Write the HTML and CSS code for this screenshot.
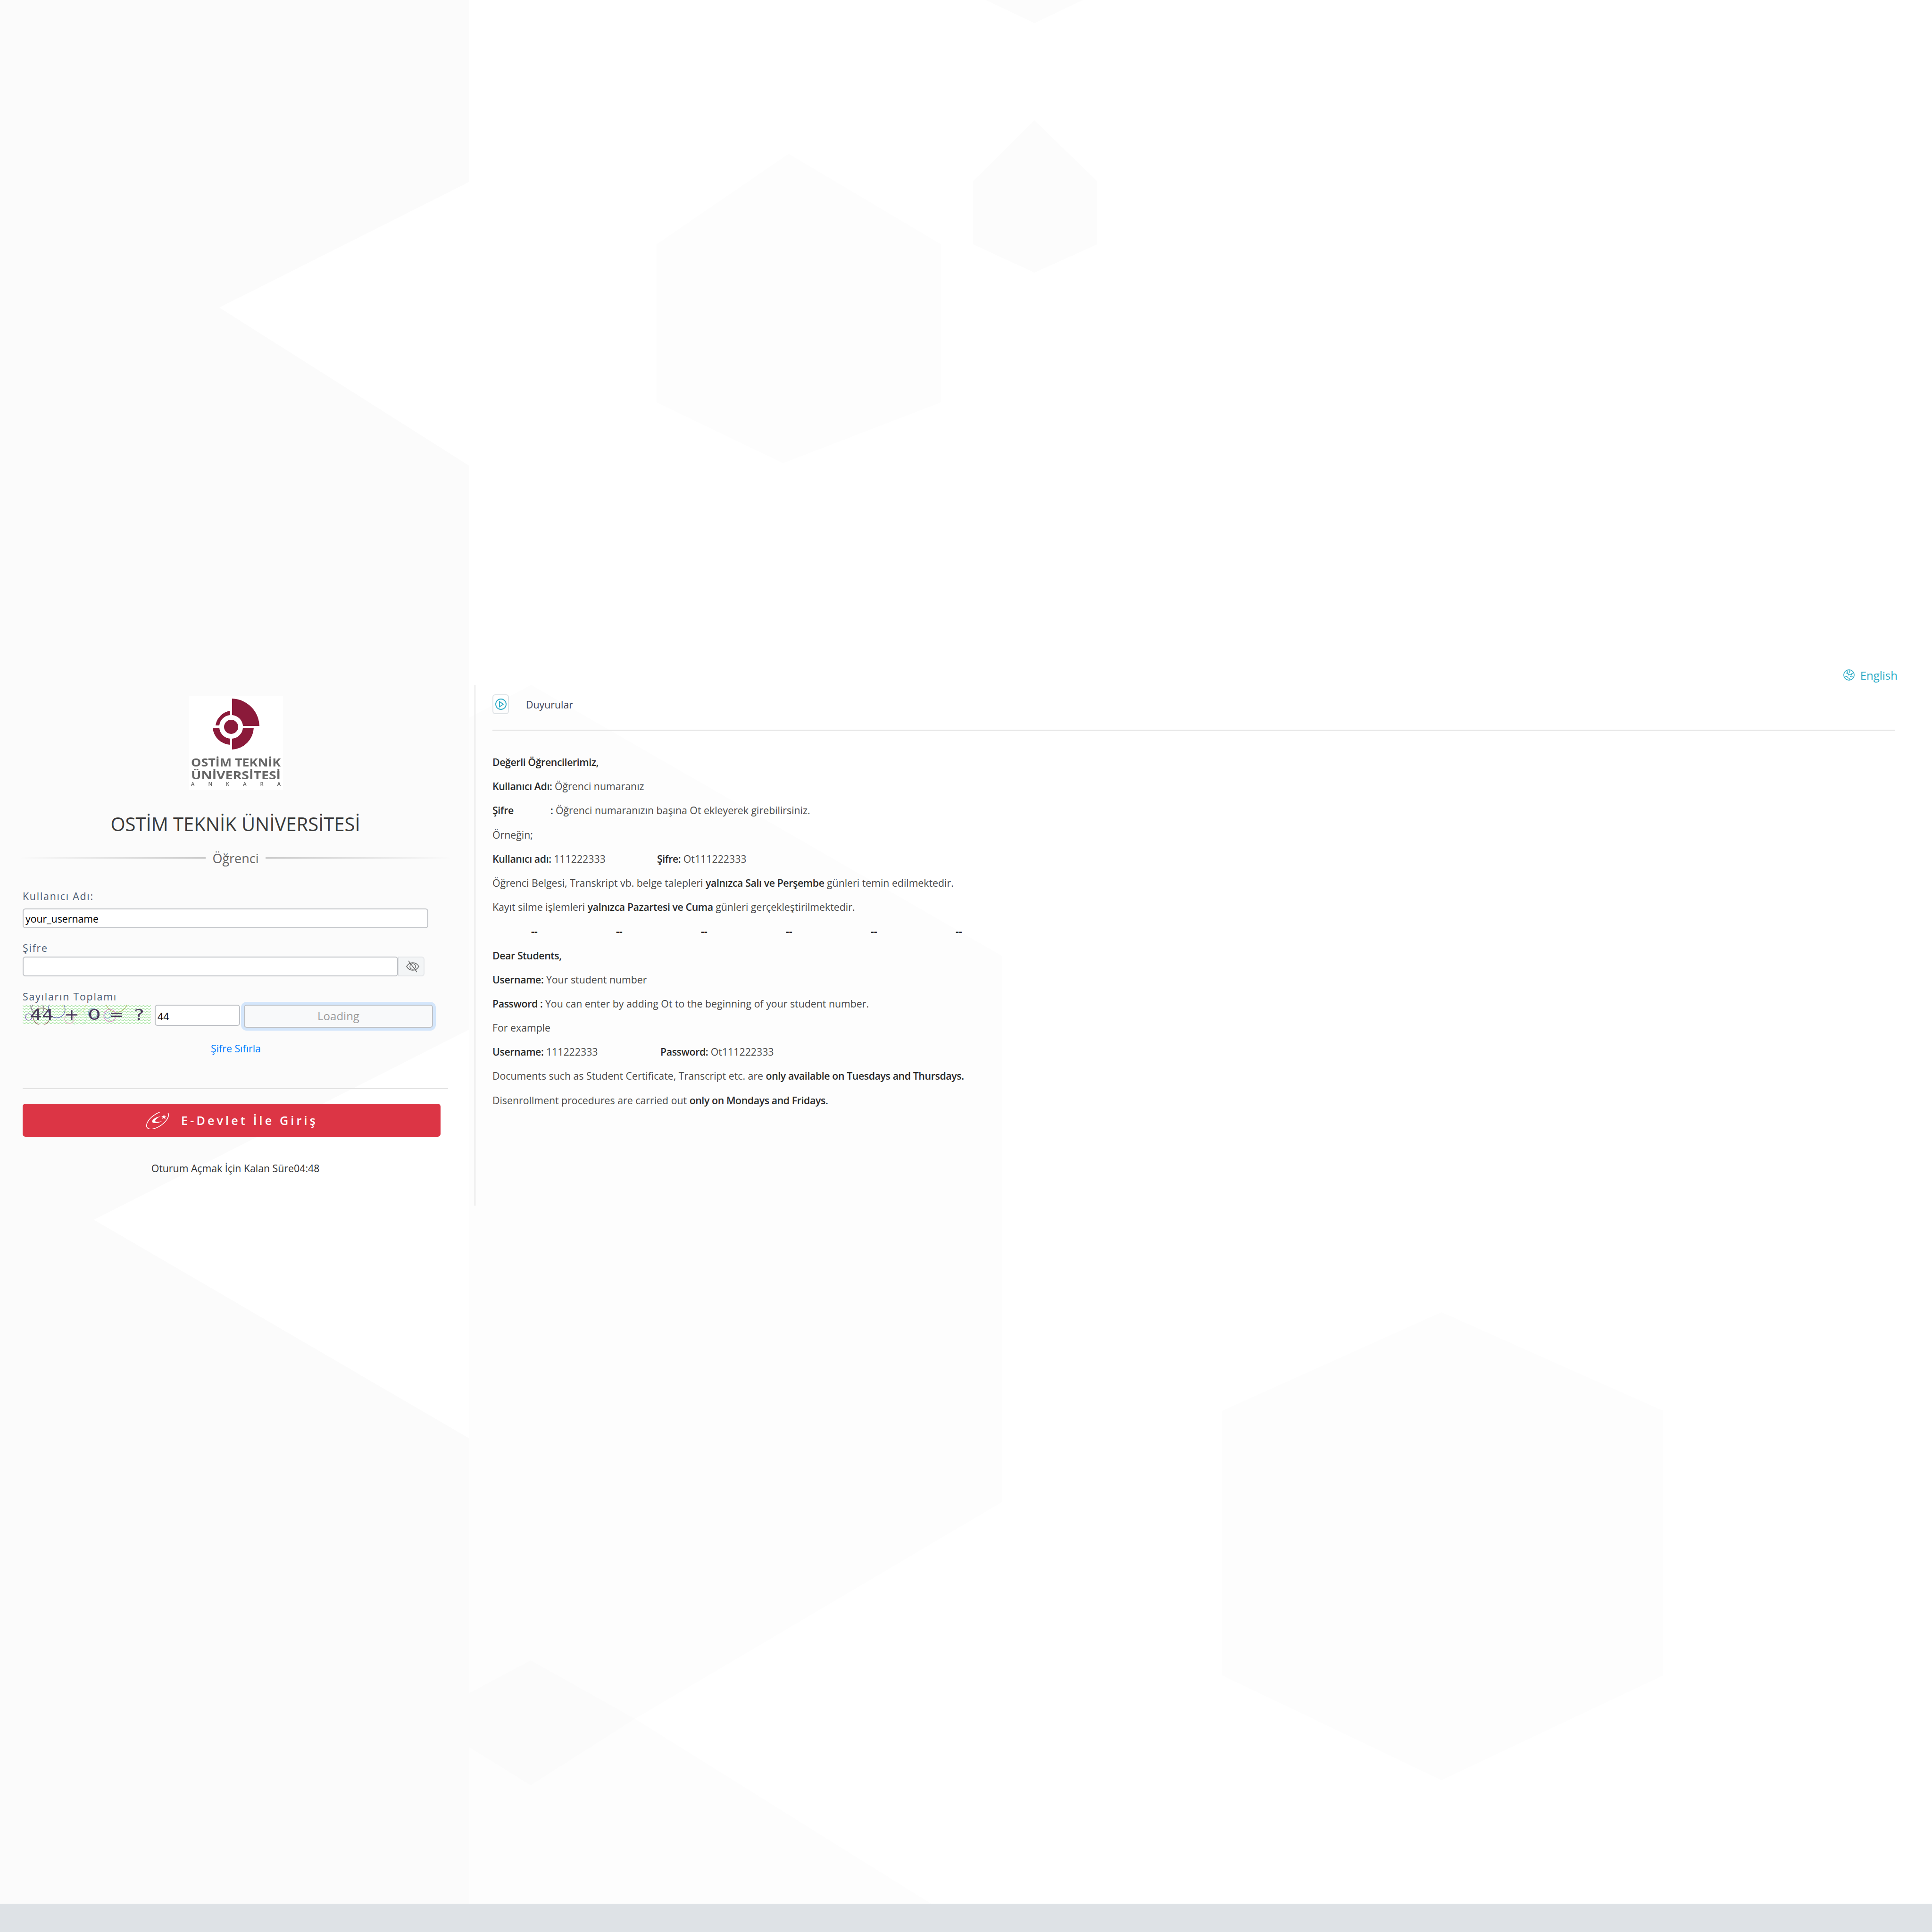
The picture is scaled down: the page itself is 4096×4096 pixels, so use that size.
FILE: index.html
```html
<!DOCTYPE html>
<html lang="tr">
<head>
<meta charset="utf-8">
<title>OSTİM Teknik Üniversitesi</title>
<link rel="stylesheet" href="styles.css">
</head>
<body>
<div class="page">
  <svg class="bg" width="4096" height="4036" viewBox="0 0 4096 4036" aria-hidden="true">
    <polygon class="s1" points="0,0 994,0 994,386 465,652 994,987 994,2183 199,2586 994,3049 994,4036 0,4036"/>
    <polygon class="s3" points="1126,1452 2125,2027 2125,3184 1346,3644 1125,3520 994,3590 994,1522"/>
    <polygon class="s3" points="994,3704 1125,3785 1346,3644 1974,4036 994,4036"/>
    <polygon class="s1" points="1125,3520 1346,3644 1125,3785 994,3704 994,3590"/>
    <polygon class="s3" points="1672,326 1995,518 1995,853 1660,982 1392,853 1392,518"/>
    <polygon class="s2" points="2193,255 2326,384 2326,518 2193,578 2063,518 2063,384"/>
    <polygon class="s2" points="2090,0 2193,49 2296,0"/>
    <polygon class="s3" points="3056,2782 3526,2991 3526,3552 3056,3774 2591,3552 2591,2991"/>
  </svg>
  <main class="main">
    <div class="lang">
      <a class="lang-link" href="#">
        <svg class="globe" width="24" height="24" viewBox="0 0 24 24" fill="none"><circle cx="12" cy="12" r="11"/><path d="M8 2c-1 2 0 3 1 4l-2 2 3 1 1 3 3-1 3 1 1-3 2-1M3 15c3-1 5 0 6 2s3 1 4 3l1 2M14 15l3 1 3 0M12 2l2 3-1 2"/></svg>
        <span>English</span>
      </a>
    </div>
    <div class="columns">
      <section class="login">
        <div class="logo">
          <svg width="200" height="200" viewBox="0 0 200 200">
            <g class="mark">
              <path d="M92 6A60 60 0 0 1 150 64L115 64A25 25 0 0 0 92 41Z"/>
              <path d="M92 68L138 68A48 48 0 0 1 92 114L92 91A25 25 0 0 0 115 68Z"/>
              <path d="M88 68L51 68A39 39 0 0 0 88 104L88 91A25 25 0 0 1 65 68Z"/>
              <path d="M88 32A37 37 0 0 0 57 63L65 63A25 25 0 0 1 88 41Z"/>
              <circle cx="90" cy="66" r="15"/>
            </g>
            <text class="logo-t" x="5" y="150" textLength="190" lengthAdjust="spacingAndGlyphs">OSTİM TEKNİK</text>
            <text class="logo-t" x="5" y="177" textLength="190" lengthAdjust="spacingAndGlyphs">ÜNİVERSİTESİ</text>
            <text class="logo-s" x="5" y="191" textLength="190" lengthAdjust="spacing">ANKARA</text>
          </svg>
        </div>
        <h1 class="title">OSTİM TEKNİK ÜNİVERSİTESİ</h1>
        <div class="role"><span class="role-line"></span><span class="role-text">Öğrenci</span><span class="role-line rev"></span></div>
        <form class="form">
          <label class="label label-user">Kullanıcı Adı:</label>
          <input class="input input-user" type="text" value="your_username">
          <label class="label label-pass">Şifre</label>
          <div class="pass-row">
            <input class="input input-pass" type="password">
            <button class="eye" type="button">
              <svg width="30" height="26" viewBox="0 0 30 26" fill="none"><path d="M2 13c3-5 7-8 13-8s10 3 13 8c-3 5-7 8-13 8S5 18 2 13Z"/><circle cx="15" cy="13" r="6"/><path d="M6 1l18 24"/></svg>
            </button>
          </div>
          <label class="label label-cap">Sayıların Toplamı</label>
          <div class="cap-row">
            <svg class="captcha" width="272" height="42" viewBox="0 0 272 42">
              <defs>
                <pattern id="zig" width="8" height="6" patternUnits="userSpaceOnUse">
                  <path d="M0 1.500l4 3 4-3" fill="none" stroke="#9fe09a" stroke-width="1.200"/>
                </pattern>
              </defs>
              <rect width="272" height="42" fill="#fbfefb"/>
              <rect width="272" height="42" fill="url(#zig)"/>
              <g fill="none" stroke-width="1.200">
                <circle cx="109" cy="-3" r="25" stroke="#d7ea9c"/>
                <circle cx="199" cy="-7" r="23" stroke="#a8b95a"/>
                <circle cx="119" cy="28" r="16" stroke="#b8ecc0"/>
                <circle cx="99" cy="30" r="10" stroke="#e8a8c8"/>
                <circle cx="149" cy="18" r="10" stroke="#7aa5c0"/>
                <circle cx="185" cy="23" r="13" stroke="#d98ac8"/>
                <circle cx="180" cy="23" r="6" stroke="#7a9ad0"/>
                <circle cx="40" cy="25" r="18" stroke="#8a5a50"/>
                <circle cx="72" cy="10" r="18" stroke="#5a5ab0"/>
                <circle cx="13" cy="26" r="7" stroke="#7a4ab8"/>
                <circle cx="32" cy="8" r="13" stroke="#7a6a80"/>
                <circle cx="25" cy="4" r="8" stroke="#807088"/>
              </g>
              <g class="cap-text">
                <text class="cap-t" x="16" y="32" textLength="50" lengthAdjust="spacingAndGlyphs">44</text>
                <text class="cap-t" x="88" y="32" textLength="32" lengthAdjust="spacingAndGlyphs">+</text>
                <text class="cap-t" x="138" y="32" textLength="28" lengthAdjust="spacingAndGlyphs">0</text>
                <text class="cap-t" x="183" y="32" textLength="32" lengthAdjust="spacingAndGlyphs">=</text>
                <text class="cap-t" x="236" y="32" textLength="22" lengthAdjust="spacingAndGlyphs">?</text>
              </g>
            </svg>
            <input class="input input-cap" type="text" value="44">
            <button class="loading" type="button">Loading</button>
          </div>
        </form>
        <a class="reset" href="#">Şifre Sıfırla</a>
        <hr class="rule">
        <a class="edevlet" href="#">
          <svg class="ed-icon" width="54" height="38" viewBox="0 0 54 38">
            <ellipse class="ed-line" cx="26" cy="19" rx="27" ry="13" transform="rotate(-35 26 19)" fill="none" stroke-dasharray="110 23"/>
            <path class="ed-fill" d="M32 11C20 12 11 21 16 24C20 26 30 25 35 21C28 23 20 23 21 20C22 17 27 13 32 11Z"/>
            <polygon class="ed-fill" points="40,7 41,11 45,11 42,13 43,17 39,14 36,16 37,12 34,10 38,10"/>
          </svg>
          <span>E-Devlet İle Giriş</span>
        </a>
        <p class="timer">Oturum Açmak İçin Kalan Süre04:48</p>
      </section>
      <section class="news">
        <header class="news-head">
          <span class="news-icon">
            <svg width="26" height="30" viewBox="0 0 26 30" fill="none"><circle cx="13" cy="15" r="11"/><path d="M10 9.500l8 5.500-8 5.500Z"/></svg>
          </span>
          <span class="news-title">Duyurular</span>
        </header>
        <div class="news-body">
          <p><b>Değerli Öğrencilerimiz,</b></p>
          <p><b>Kullanıcı Adı:</b> Öğrenci numaranız</p>
          <p><b class="w-sifre">Şifre</b><b>:</b> Öğrenci numaranızın başına Ot ekleyerek girebilirsiniz.</p>
          <p>Örneğin;</p>
          <p><span class="w-tr"><b>Kullanıcı adı:</b> 111222333</span><b>Şifre:</b> Ot111222333</p>
          <p>Öğrenci Belgesi, Transkript vb. belge talepleri <b>yalnızca Salı ve Perşembe</b> günleri temin edilmektedir.</p>
          <p>Kayıt silme işlemleri <b>yalnızca Pazartesi ve Cuma</b> günleri gerçekleştirilmektedir.</p>
          <p class="dashes"><b>--</b><b>--</b><b>--</b><b>--</b><b>--</b><b>--</b></p>
          <p><b>Dear Students,</b></p>
          <p><b>Username:</b> Your student number</p>
          <p><b>Password :</b> You can enter by adding Ot to the beginning of your student number.</p>
          <p>For example</p>
          <p><span class="w-en"><b>Username:</b> 111222333</span><b>Password:</b> Ot111222333</p>
          <p>Documents such as Student Certificate, Transcript etc. are <b>only available on Tuesdays and Thursdays.</b></p>
          <p>Disenrollment procedures are carried out <b>only on Mondays and Fridays.</b></p>
        </div>
      </section>
    </div>
  </main>
  <footer class="footer"></footer>
</div>
</body>
</html>
```

FILE: styles.css
```css
* { box-sizing: border-box; }
html, body { margin: 0; padding: 0; }
body { font-family: "Open Sans", "Liberation Sans", sans-serif; color: #3f4254; background: #fff; }
.page { position: relative; width: 4096px; height: 4096px; display: flex; flex-direction: column; }
.bg { position: absolute; left: 0; top: 0; }
.s1 { fill: #fbfbfb; }
.s2 { fill: #fcfcfc; }
.s3 { fill: #fdfdfd; }
.main { position: relative; flex: 1; padding-top: 1413px; }
.footer { position: relative; height: 60px; background: #dee2e6; }

.lang { display: flex; justify-content: flex-end; height: 39px; padding-right: 73px; }
.lang-link { display: flex; align-items: center; gap: 12px; height: 36px; color: #26a9c5; font-size: 24px; text-decoration: none; }
.globe { stroke: #26a9c5; stroke-width: 1.6; }

.columns { display: flex; align-items: flex-start; }
.login { width: 1008px; height: 1104px; padding: 23px 56px 0 48px; border-right: 2px solid #e2e2e2; display: flex; flex-direction: column; }
.logo { width: 200px; height: 200px; background: #fff; margin-left: 352px; }
.logo svg { display: block; filter: blur(0.5px); }
.mark { fill: #8b1a3a; }
.logo-t { font-family: "Open Sans", sans-serif; font-weight: 700; font-size: 24px; fill: #666; }
.logo-s { font-family: "Open Sans", sans-serif; font-weight: 600; font-size: 11px; fill: #666; }

.title { margin: 42px 0 0; height: 60px; line-height: 60px; font-size: 40px; font-weight: 400; color: #3a3a3a; text-align: center; white-space: nowrap; }
.role { display: flex; align-items: center; margin: 19px -9px 0 -8px; height: 46px; }
.role-line { flex: 1; height: 2px; background: linear-gradient(to right, rgba(140,140,140,0), #8c8c8c); }
.role-line.rev { background: linear-gradient(to left, rgba(140,140,140,0), #8c8c8c); }
.role-text { padding: 0 14px; font-size: 27px; color: #666; }

.form { display: flex; flex-direction: column; margin-top: 44px; }
.label { display: block; color: #4a5a72; font-size: 21.300px; letter-spacing: 1.800px; line-height: 28px; }
.input { display: block; height: 42px; padding: 0 4px; border: 2px solid #bfc2c6; border-radius: 6px; background: #fff; font-family: inherit; font-size: 21.300px; color: #000; outline: none; }
.input-user { width: 860px; margin-top: 12px; }
.label-pass { margin-top: 28px; }
.pass-row { display: flex; margin-top: 4px; }
.input-pass { width: 796px; }
.eye { width: 56px; height: 42px; padding: 0 0 0 6px; display: flex; align-items: center; justify-content: center; background: #f3f5f6; border: 2px solid #e4e6e9; border-radius: 0 6px 6px 0; }
.eye svg { stroke: #666; stroke-width: 1.500; }
.label-cap { margin-top: 29px; }
.cap-row { display: flex; align-items: flex-start; margin-top: 3px; }
.captcha { display: block; }
.cap-text { filter: blur(0.4px); }
.cap-t { font-family: "DejaVu Sans", sans-serif; font-size: 32px; fill: #4a3a5c; }
.input-cap { width: 181px; height: 45px; margin-left: 8px; padding-top: 3px; }
.loading { width: 401px; height: 49px; margin-left: 8px; padding: 0 0 3px; background: #f8f9fa; border: 2px solid #bfc2c6; border-radius: 6px; box-shadow: 0 0 0 6px #d4e6fb; font-family: inherit; font-size: 24px; color: #9a9a9a; }

.reset { margin-top: 30px; padding-left: 2px; line-height: 28px; text-align: center; color: #007bff; font-size: 21.300px; text-decoration: none; }
.rule { width: 100%; margin: 70px 0 0; border: 0; border-top: 2px solid #e2e2e2; }
.edevlet { display: flex; align-items: center; justify-content: center; gap: 22px; width: 886px; height: 70px; margin-top: 31px; background: #dc3545; border-radius: 6px; color: #fff; font-size: 25px; font-weight: 600; letter-spacing: 5.200px; text-decoration: none; }
.ed-line { stroke: #fff; stroke-width: 1.600; }
.ed-fill { fill: #fff; }
.timer { margin: 52px 0 0; line-height: 30px; text-align: center; font-size: 21.300px; color: #333; }

.news { width: 3010px; padding: 20px 0 0 36px; }
.news-head { display: flex; align-items: center; gap: 36px; height: 42px; }
.news-icon { width: 35px; height: 42px; display: flex; align-items: center; justify-content: center; border: 2px solid #dfe3e6; border-radius: 6px; }
.news-icon svg { stroke: #26a9c5; stroke-width: 1.800; }
.news-title { font-size: 21.300px; color: #3f4254; }
.news-body { margin-top: 33px; border-top: 2px solid #e2e2e2; padding-top: 41px; font-size: 21.300px; line-height: 51.200px; color: #4a4a4a; }
.news-body p { margin: 0; height: 51.200px; white-space: nowrap; }
.news-body b { color: #2b2b2b; font-weight: 600; letter-spacing: -0.400px; }
.w-sifre { display: inline-block; width: 123px; }
.w-tr { display: inline-block; width: 349px; }
.w-en { display: inline-block; width: 356px; }
.dashes { display: grid; grid-template-columns: repeat(6, 180px); padding-left: 82px; }
.news-body .dashes b { font-weight: 700; letter-spacing: 0; }
```
